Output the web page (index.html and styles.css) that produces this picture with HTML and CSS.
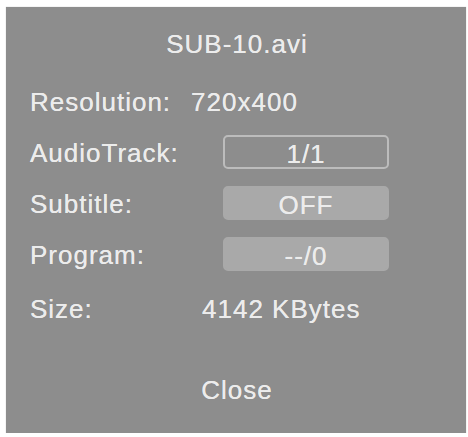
FILE: index.html
```html
<!DOCTYPE html>
<html>
<head>
<meta charset="utf-8">
<link rel="stylesheet" href="styles.css">
</head>
<body>
<div class="panel">
  <div class="title">SUB-10.avi</div>
  <div class="rows">
    <div class="row">
      <span class="label label-auto">Resolution:</span>
      <span class="res-value">720x400</span>
    </div>
    <div class="row">
      <span class="label">AudioTrack:</span>
      <span class="box box-outline">1/1</span>
    </div>
    <div class="row">
      <span class="label">Subtitle:</span>
      <span class="box box-filled">OFF</span>
    </div>
    <div class="row">
      <span class="label">Program:</span>
      <span class="box box-filled">--/0</span>
    </div>
    <div class="row row-size">
      <span class="label label-size">Size:</span>
      <span class="size-value">4142 KBytes</span>
    </div>
  </div>
  <div class="close">Close</div>
</div>
</body>
</html>
```

FILE: styles.css
```css
html, body {
  margin: 0;
  padding: 0;
  background: #ffffff;
}

body {
  padding: 7px 0 0 6px;
  font-family: "Liberation Sans", Arial, sans-serif;
}

.panel {
  box-sizing: border-box;
  width: 460px;
  height: 426px;
  background: #8d8d8d;
  color: #ececec;
  padding: 19px 0 0 24px;
  font-size: 26px;
  letter-spacing: 1px;
  text-shadow: 0 0 0.6px #ececec;
  box-shadow: 0 0 1px #bdbdbd;
}

.title {
  height: 34px;
  line-height: 37px;
  text-align: center;
  padding-right: 22px;
}

.rows {
  margin-top: 24px;
  display: flex;
  flex-direction: column;
  gap: 17px;
}

.row {
  height: 34px;
  display: flex;
  align-items: flex-start;
}

.label {
  width: 193px;
  flex: none;
  line-height: 37px;
  white-space: nowrap;
}

.label-auto {
  width: auto;
}

.label-size {
  width: 172px;
}

.res-value {
  margin-left: 20px;
  line-height: 37px;
}

.size-value {
  line-height: 37px;
  white-space: nowrap;
}

.row-size {
  margin-top: 3px;
}

.box {
  box-sizing: border-box;
  width: 166px;
  height: 34px;
  border-radius: 5px;
  text-align: center;
  padding-top: 2px;
  line-height: 31px;
}

.box-outline {
  border: 2px solid #bcbcbc;
  background: transparent;
}

.box-filled {
  border: 2px solid #a9a9a9;
  background: #a9a9a9;
}

.close {
  margin-top: 47px;
  height: 34px;
  line-height: 37px;
  text-align: center;
  padding-right: 22px;
}
```
